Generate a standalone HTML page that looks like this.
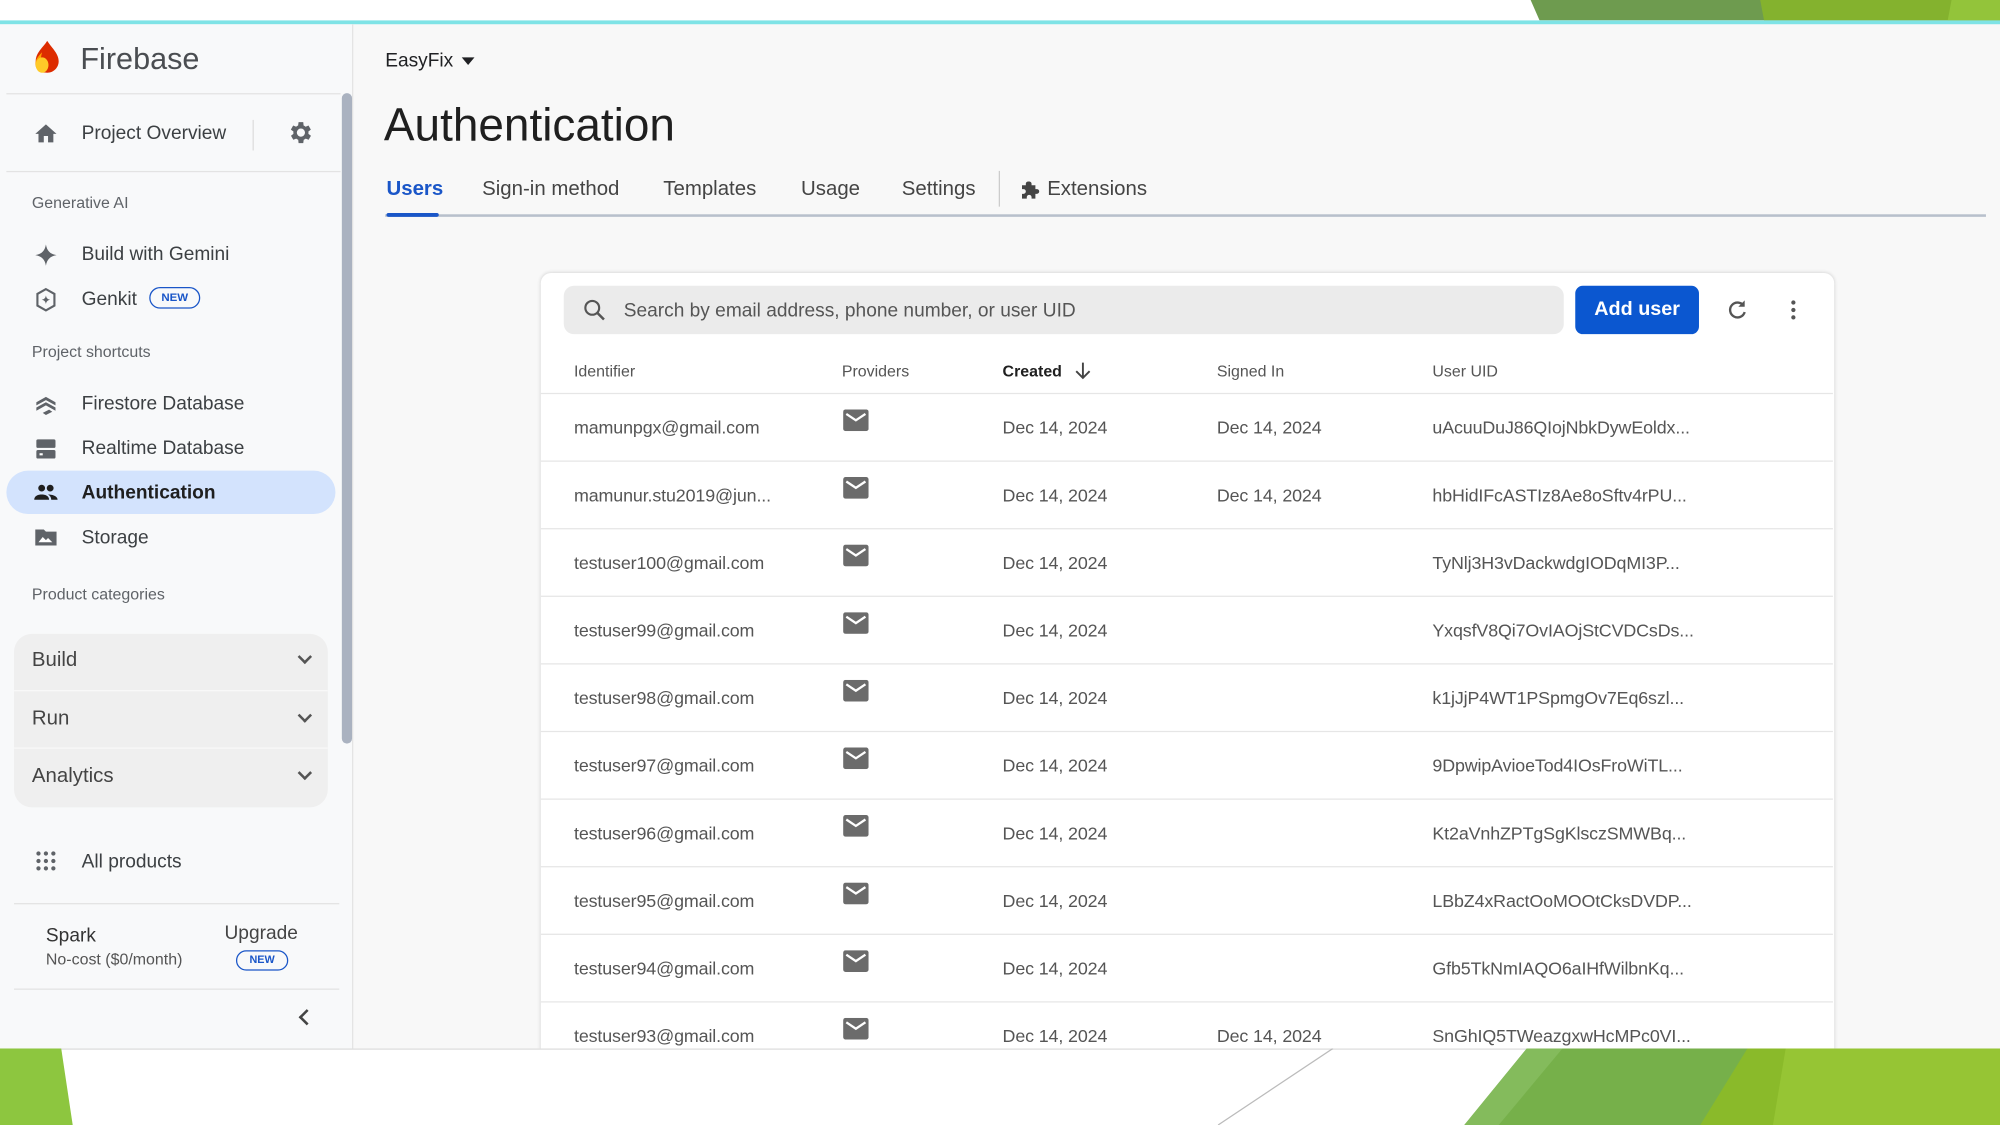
<!DOCTYPE html>
<html><head><meta charset="utf-8"><style>
*{box-sizing:border-box;margin:0;padding:0}
html,body{width:2000px;height:1125px;overflow:hidden;background:#fff}
#w{position:absolute;left:0;top:0;width:1568px;height:882px;transform:scale(1.27551);transform-origin:0 0;font-family:"Liberation Sans",Arial,sans-serif;color:#3c4043;overflow:hidden}
.a{position:absolute}
.app{position:absolute;left:0;top:19px;width:1568px;height:803px;background:#f8f8f8;overflow:hidden}
.side{position:absolute;left:0;top:0;width:277px;height:803px;background:#f8f9fa;border-right:1px solid #e3e3e3}
.it{position:absolute;left:64px;font-size:15px;color:#3c4043;line-height:18px}
.ic{position:absolute;left:26px;width:20px;height:20px}
.lab{position:absolute;left:25px;font-size:12.5px;color:#5f6368}
.hr{position:absolute;height:1px;background:#e3e3e3}
.tab{position:absolute;top:140px;font-size:16px;color:#444}
.th{position:absolute;top:284px;font-size:12.5px;color:#555}
.row{position:absolute;left:0;width:1013px;height:53px;border-top:1px solid #e6e6e6}
.row span{position:absolute;top:18px;font-size:14px;color:#555;letter-spacing:-0.1px}
.mail{position:absolute;left:237px;top:12px;width:20px;height:17px}
.cv{position:absolute;right:14px;width:8px;height:8px;border-right:2px solid #555;border-bottom:2px solid #555;transform:rotate(45deg)}
</style></head><body><div id="w">
<svg width="0" height="0" style="position:absolute"><defs><symbol id="m" viewBox="0 0 20 17"><rect x="0" y="0" width="20" height="17" rx="2" fill="#6b6b6b"/><path d="M2.5 3.5l7.5 5 7.5-5" fill="none" stroke="#fff" stroke-width="1.8"/></symbol></defs></svg>
<div class="a" style="left:0;top:0;width:1568px;height:16px;background:#fff"></div>
<svg class="a" style="left:0;top:0" width="1568" height="16"><polygon points="1200,0 1568,0 1568,16 1207,16" fill="#6e9b4f"/><polygon points="1380,0 1568,0 1568,16 1383,16" fill="#84b22e"/><polygon points="1530,0 1568,0 1568,16 1527,16" fill="#93c43a"/></svg>
<div class="a" style="left:0;top:16px;width:1568px;height:4px;background:#7fe3e6"></div>
<div class="app">
 <div class="side">
  <svg class="a" style="left:25px;top:12px" width="24" height="28" viewBox="0 0 24 28"><path d="M12 1C9 6 3 10 3 17c0 5 4 9 9 9s9-4 9-9c0-6-5-10-9-16z" fill="#dd2c00"/><path d="M8 10c-4 4-6 7-5 11 1 3 4 5 7 5-3-4-4-9-2-16z" fill="#ffa000"/><ellipse cx="8" cy="20" rx="5" ry="6" fill="#ffca28"/></svg>
  <div class="a" style="left:63px;top:14px;font-size:24px;color:#4a4d51">Firebase</div>
  <div class="hr" style="left:5px;top:54px;width:262px"></div>
  <svg class="ic" style="top:76px" viewBox="0 0 24 24"><path d="M10 20v-6h4v6h5v-8h3L12 3 2 12h3v8z" fill="#5f6368"/></svg>
  <div class="it" style="top:77px">Project Overview</div>
  <div class="a" style="left:198px;top:75px;width:1px;height:24px;background:#ddd"></div>
  <svg class="a" style="left:224px;top:74px" width="22" height="22" viewBox="0 0 24 24"><path d="M19.4 13a7.5 7.5 0 000-2l2.1-1.6-2-3.5-2.5 1a7 7 0 00-1.7-1L15 3h-4l-.4 2.9a7 7 0 00-1.7 1l-2.5-1-2 3.5L6.6 11a7.5 7.5 0 000 2l-2.1 1.6 2 3.5 2.5-1a7 7 0 001.7 1L11 21h4l.4-2.9a7 7 0 001.7-1l2.5 1 2-3.5zM13 15.5a3.5 3.5 0 110-7 3.5 3.5 0 010 7z" fill="#5f6368"/></svg>
  <div class="hr" style="left:5px;top:115px;width:262px"></div>
  <div class="lab" style="top:133px">Generative AI</div>
  <svg class="ic" style="top:171px" viewBox="0 0 24 24"><path d="M12 2c1 6 4 9 10 10-6 1-9 4-10 10-1-6-4-9-10-10 6-1 9-4 10-10z" fill="#5f6368"/></svg>
  <div class="it" style="top:172px">Build with Gemini</div>
  <svg class="ic" style="top:206px" viewBox="0 0 24 24"><path d="M12 2l8 4.5v11L12 22l-8-4.5v-11z" fill="none" stroke="#5f6368" stroke-width="2"/><path d="M12 8c.5 2.5 1.5 3.5 4 4-2.5.5-3.5 1.5-4 4-.5-2.5-1.5-3.5-4-4 2.5-.5 3.5-1.5 4-4z" fill="#5f6368"/></svg>
  <div class="it" style="top:207px">Genkit</div>
  <div class="a" style="left:117px;top:206px;width:40px;height:17px;border:1.5px solid #1a56c8;border-radius:9px;font-size:9px;font-weight:bold;color:#1a56c8;text-align:center;line-height:14px">NEW</div>
  <div class="lab" style="top:250px">Project shortcuts</div>
  <svg class="ic" style="top:288px" viewBox="0 0 24 24"><path d="M3 10l9-5 9 5v3l-9-5-9 5zM3 15l9-5 9 5v3l-9-5-9 5zM9 20l6-3 3 2-6 3z" fill="#5f6368"/></svg>
  <div class="it" style="top:289px">Firestore Database</div>
  <svg class="ic" style="top:323px" viewBox="0 0 24 24"><rect x="3" y="3" width="18" height="8" rx="1.5" fill="#5f6368"/><rect x="3" y="13" width="18" height="8" rx="1.5" fill="#5f6368"/><rect x="6" y="16" width="3" height="2" fill="#fff"/></svg>
  <div class="it" style="top:324px">Realtime Database</div>
  <div class="a" style="left:5px;top:350px;width:258px;height:34px;background:#d3e3fd;border-radius:17px"></div>
  <svg class="ic" style="top:357px" viewBox="0 0 24 24"><circle cx="8" cy="8" r="3.2" fill="#1f1f1f"/><circle cx="16" cy="8" r="3.2" fill="#1f1f1f"/><path d="M1 19c0-4 4-5 7-5s7 1 7 5zM14 14c3 0 9 1 9 5h-6c0-2-1-4-3-5z" fill="#1f1f1f"/></svg>
  <div class="it" style="top:359px;color:#1f1f1f;font-weight:bold">Authentication</div>
  <svg class="ic" style="top:392px" viewBox="0 0 24 24"><path d="M2 5h8l2 2h10v13H2z" fill="#5f6368"/><path d="M5 17l4-5 3 3 2-2 4 4z" fill="#fff"/></svg>
  <div class="it" style="top:394px">Storage</div>
  <div class="lab" style="top:440px">Product categories</div>
  <div class="a" style="left:11px;top:478px;width:246px;height:136px;background:#efefef;border-radius:14px;overflow:hidden">
   <div class="a" style="left:0;top:0;width:246px;height:45px;border-bottom:1px solid #f8f8f8"><div class="a" style="left:14px;top:12px;font-size:16px;color:#444">Build</div><div class="cv" style="top:14px"></div></div>
   <div class="a" style="left:0;top:46px;width:246px;height:44px;border-bottom:1px solid #f8f8f8"><div class="a" style="left:14px;top:12px;font-size:16px;color:#444">Run</div><div class="cv" style="top:14px"></div></div>
   <div class="a" style="left:0;top:92px;width:246px;height:44px"><div class="a" style="left:14px;top:11px;font-size:16px;color:#444">Analytics</div><div class="cv" style="top:13px"></div></div>
  </div>
  <svg class="ic" style="top:646px" viewBox="0 0 24 24" fill="#5f6368"><circle cx="5" cy="5" r="2"/><circle cx="12" cy="5" r="2"/><circle cx="19" cy="5" r="2"/><circle cx="5" cy="12" r="2"/><circle cx="12" cy="12" r="2"/><circle cx="19" cy="12" r="2"/><circle cx="5" cy="19" r="2"/><circle cx="12" cy="19" r="2"/><circle cx="19" cy="19" r="2"/></svg>
  <div class="it" style="top:648px">All products</div>
  <div class="hr" style="left:11px;top:689px;width:255px"></div>
  <div class="a" style="left:36px;top:706px;font-size:15px;color:#333">Spark</div>
  <div class="a" style="left:36px;top:726px;font-size:12.5px;color:#555">No-cost ($0/month)</div>
  <div class="a" style="left:176px;top:704px;font-size:15px;color:#444">Upgrade</div>
  <div class="a" style="left:185px;top:726px;width:41px;height:16px;border:1.5px solid #1a56c8;border-radius:8px;font-size:8.5px;font-weight:bold;color:#1a56c8;text-align:center;line-height:13px">NEW</div>
  <div class="hr" style="left:11px;top:756px;width:255px"></div>
  <div class="a" style="left:236px;top:774px;width:9px;height:9px;border-left:2px solid #444;border-bottom:2px solid #444;transform:rotate(45deg)"></div>
  <div class="a" style="left:268px;top:54px;width:8px;height:510px;background:#aab2c0;border-radius:4px"></div>
 </div>
 <div class="a" style="left:302px;top:20px;font-size:15px;color:#202124">EasyFix</div>
 <div class="a" style="left:362px;top:26px;border-left:5px solid transparent;border-right:5px solid transparent;border-top:6px solid #202124"></div>
 <div class="a" style="left:301px;top:58px;font-size:36px;color:#1f1f1f">Authentication</div>
 <div class="tab" style="left:303px;top:121px;color:#1a56c8;font-weight:bold">Users</div>
 <div class="tab" style="left:378px;top:121px">Sign-in method</div>
 <div class="tab" style="left:520px;top:121px">Templates</div>
 <div class="tab" style="left:628px;top:121px">Usage</div>
 <div class="tab" style="left:707px;top:121px">Settings</div>
 <div class="a" style="left:783px;top:115px;width:1px;height:28px;background:#ccc"></div>
 <svg class="a" style="left:799px;top:121px" width="18" height="18" viewBox="0 0 24 24"><path d="M10 3c2 0 3 1 3 2.5V7h4v4h1.5a2.5 2.5 0 010 5H17v5h-4v-1.5a2.5 2.5 0 00-5 0V21H3v-5h1.5a2.5 2.5 0 000-5H3V7h4V5.5C7 4 8 3 10 3z" fill="#444"/></svg>
 <div class="tab" style="left:821px;top:121px">Extensions</div>
 <div class="a" style="left:302px;top:149px;width:1255px;height:2px;background:#b8c0cc"></div>
 <div class="a" style="left:303px;top:148px;width:41px;height:3px;background:#1a56c8;border-radius:2px"></div>
 <div class="a" style="left:424px;top:195px;width:1014px;height:640px;background:#fff;border-radius:8px;box-shadow:0 0 3px rgba(0,0,0,.15)">
  <div class="a" style="left:18px;top:10px;width:784px;height:38px;background:#ebebeb;border-radius:8px"></div>
  <svg class="a" style="left:32px;top:19px" width="20" height="20" viewBox="0 0 24 24"><circle cx="10" cy="10" r="6.5" fill="none" stroke="#555" stroke-width="2"/><path d="M15 15l6 6" stroke="#555" stroke-width="2.4"/></svg>
  <div class="a" style="left:65px;top:21px;font-size:15px;color:#555">Search by email address, phone number, or user UID</div>
  <div class="a" style="left:811px;top:10px;width:97px;height:38px;background:#0b57d0;border-radius:6px;color:#fff;font-size:15.5px;font-weight:bold;text-align:center;line-height:38px">Add user</div>
  <svg class="a" style="left:928px;top:19px" width="20" height="20" viewBox="0 0 24 24"><path d="M18 8A7 7 0 1019 14" fill="none" stroke="#555" stroke-width="2.2"/><path d="M19 3v6h-6z" fill="#555"/></svg>
  <svg class="a" style="left:972px;top:19px" width="20" height="20" viewBox="0 0 24 24" fill="#555"><circle cx="12" cy="5" r="2"/><circle cx="12" cy="12" r="2"/><circle cx="12" cy="19" r="2"/></svg>
  <div class="th" style="left:26px;top:70px">Identifier</div>
  <div class="th" style="left:236px;top:70px">Providers</div>
  <div class="th" style="left:362px;top:70px;color:#1f1f1f;font-weight:bold">Created</div>
  <svg class="a" style="left:416px;top:68px" width="18" height="18" viewBox="0 0 24 24"><path d="M12 3v16M5 12l7 7 7-7" fill="none" stroke="#444" stroke-width="2"/></svg>
  <div class="th" style="left:530px;top:70px">Signed In</div>
  <div class="th" style="left:699px;top:70px">User UID</div>
  <div class="row" style="top:94px"><span style="left:26px">mamunpgx@gmail.com</span><svg class="mail"><use href="#m"/></svg><span style="left:362px">Dec 14, 2024</span><span style="left:530px">Dec 14, 2024</span><span style="left:699px">uAcuuDuJ86QIojNbkDywEoldx...</span></div>
  <div class="row" style="top:147px"><span style="left:26px">mamunur.stu2019@jun...</span><svg class="mail"><use href="#m"/></svg><span style="left:362px">Dec 14, 2024</span><span style="left:530px">Dec 14, 2024</span><span style="left:699px">hbHidIFcASTIz8Ae8oSftv4rPU...</span></div>
  <div class="row" style="top:200px"><span style="left:26px">testuser100@gmail.com</span><svg class="mail"><use href="#m"/></svg><span style="left:362px">Dec 14, 2024</span><span style="left:699px">TyNlj3H3vDackwdgIODqMI3P...</span></div>
  <div class="row" style="top:253px"><span style="left:26px">testuser99@gmail.com</span><svg class="mail"><use href="#m"/></svg><span style="left:362px">Dec 14, 2024</span><span style="left:699px">YxqsfV8Qi7OvIAOjStCVDCsDs...</span></div>
  <div class="row" style="top:306px"><span style="left:26px">testuser98@gmail.com</span><svg class="mail"><use href="#m"/></svg><span style="left:362px">Dec 14, 2024</span><span style="left:699px">k1jJjP4WT1PSpmgOv7Eq6szl...</span></div>
  <div class="row" style="top:359px"><span style="left:26px">testuser97@gmail.com</span><svg class="mail"><use href="#m"/></svg><span style="left:362px">Dec 14, 2024</span><span style="left:699px">9DpwipAvioeTod4IOsFroWiTL...</span></div>
  <div class="row" style="top:412px"><span style="left:26px">testuser96@gmail.com</span><svg class="mail"><use href="#m"/></svg><span style="left:362px">Dec 14, 2024</span><span style="left:699px">Kt2aVnhZPTgSgKlsczSMWBq...</span></div>
  <div class="row" style="top:465px"><span style="left:26px">testuser95@gmail.com</span><svg class="mail"><use href="#m"/></svg><span style="left:362px">Dec 14, 2024</span><span style="left:699px">LBbZ4xRactOoMOOtCksDVDP...</span></div>
  <div class="row" style="top:518px"><span style="left:26px">testuser94@gmail.com</span><svg class="mail"><use href="#m"/></svg><span style="left:362px">Dec 14, 2024</span><span style="left:699px">Gfb5TkNmIAQO6aIHfWilbnKq...</span></div>
  <div class="row" style="top:571px"><span style="left:26px">testuser93@gmail.com</span><svg class="mail"><use href="#m"/></svg><span style="left:362px">Dec 14, 2024</span><span style="left:530px">Dec 14, 2024</span><span style="left:699px">SnGhIQ5TWeazgxwHcMPc0VI...</span></div>
 </div>
</div>
<div class="a" style="left:0;top:822px;width:1568px;height:60px;background:#fff;border-top:1px solid #ddd"></div>
<svg class="a" style="left:0;top:822px" width="1568" height="60"><polygon points="0,0 48,0 57,60 0,60" fill="#8dc63f"/><line x1="1045" y1="0" x2="955" y2="60" stroke="#bbb" stroke-width="1"/><polygon points="1197,0 1568,0 1568,60 1148,60" fill="#76b04a"/><polygon points="1197,0 1225,0 1175,60 1148,60" fill="#84bb5c"/><polygon points="1370,0 1568,0 1568,60 1333,60" fill="#8aba2a"/><polygon points="1400,0 1568,0 1568,60 1390,60" fill="#96c534"/></svg>
</div></body></html>
